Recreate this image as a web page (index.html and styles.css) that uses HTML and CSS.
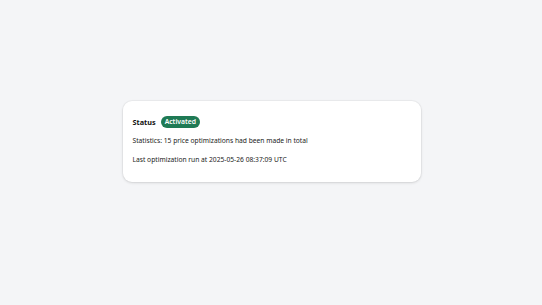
FILE: index.html
```html
<!DOCTYPE html>
<html>
<head>
<meta charset="utf-8">
<link rel="stylesheet" href="styles.css">
</head>
<body>
<main class="page">
  <section class="card">
    <div class="status-row">
      <span class="status-label">Status</span>
      <span class="badge">Activated</span>
    </div>
    <p class="line">Statistics: 15 price optimizations had been made in total</p>
    <p class="line">Last optimization run at 2025-05-26 08:37:09 UTC</p>
  </section>
</main>
</body>
</html>
```

FILE: styles.css
```css
html, body {
  margin: 0;
  padding: 0;
  background: #f4f5f7;
}
body {
  font-family: "Noto Sans", "Open Sans", sans-serif;
  color: #222222;
  font-size: 6.7px;
}
.page {
  display: flex;
  justify-content: center;
  padding-top: 101px;
  height: 305px;
  box-sizing: border-box;
}
.card {
  width: 298px;
  height: 81px;
  box-sizing: border-box;
  background: #ffffff;
  border-radius: 9px;
  box-shadow: 0 1px 3px rgba(0, 0, 0, 0.12), 0 0 0 1px rgba(0, 0, 0, 0.03);
  padding: 15px 10px 10px 10px;
  margin-left: 1px;
}
.status-row {
  display: flex;
  align-items: center;
  gap: 5px;
  height: 12px;
}
.status-label {
  font-weight: 700;
  font-size: 7.3px;
  color: #111111;
}
.badge {
  background: #1f7a55;
  color: #ffffff;
  border-radius: 6px;
  padding: 0 4px;
  height: 12px;
  line-height: 12px;
  font-size: 6.8px;
  font-weight: 600;
}
.line {
  margin: 0;
  line-height: 12px;
  margin-top: 7px;
}
.line + .line {
  margin-top: 7px;
}
```
